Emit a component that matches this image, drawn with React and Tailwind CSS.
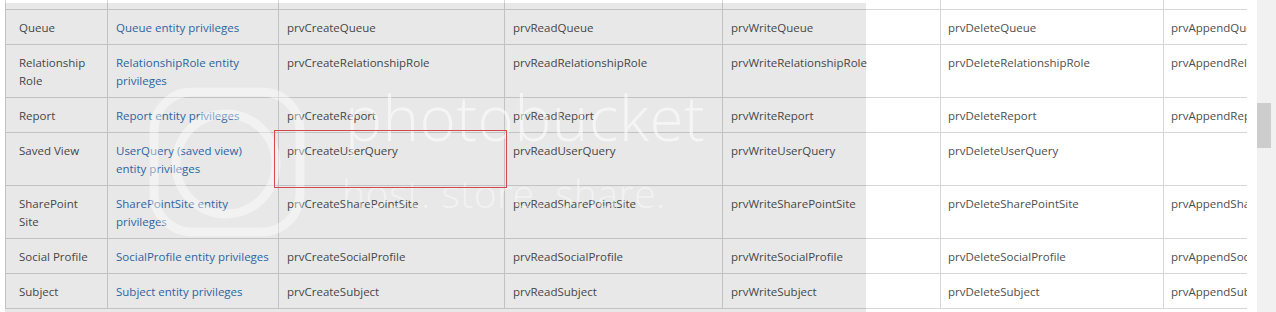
const cols = [
  { w: "w-[102px]", pad: "pl-[13px] pr-1" },
  { w: "w-[171px]", pad: "px-2" },
  { w: "w-[226px]", pad: "px-2" },
  { w: "w-[218px]", pad: "px-2" },
  { w: "w-[218px]", pad: "px-2" },
  { w: "w-[223px]", pad: "pl-[7px] pr-2" },
  { w: "w-[220px]", pad: "pl-[7px] pr-2" },
];

const rows = [
  [["Queue"], ["Queue entity privileges"], "prvCreateQueue", "prvReadQueue", "prvWriteQueue", "prvDeleteQueue", "prvAppendQueue"],
  [["Relationship", "Role"], ["RelationshipRole entity", "privileges"], "prvCreateRelationshipRole", "prvReadRelationshipRole", "prvWriteRelationshipRole", "prvDeleteRelationshipRole", "prvAppendRelationshipRole"],
  [["Report"], ["Report entity privileges"], "prvCreateReport", "prvReadReport", "prvWriteReport", "prvDeleteReport", "prvAppendReport"],
  [["Saved View"], ["UserQuery (saved view)", "entity privileges"], "prvCreateUserQuery", "prvReadUserQuery", "prvWriteUserQuery", "prvDeleteUserQuery", ""],
  [["SharePoint", "Site"], ["SharePointSite entity", "privileges"], "prvCreateSharePointSite", "prvReadSharePointSite", "prvWriteSharePointSite", "prvDeleteSharePointSite", "prvAppendSharePointSite"],
  [["Social Profile"], ["SocialProfile entity privileges"], "prvCreateSocialProfile", "prvReadSocialProfile", "prvWriteSocialProfile", "prvDeleteSocialProfile", "prvAppendSocialProfile"],
  [["Subject"], ["Subject entity privileges"], "prvCreateSubject", "prvReadSubject", "prvWriteSubject", "prvDeleteSubject", "prvAppendSubject"],
];

const Lines = ({ lines }) =>
  lines.map((l, i) => (
    <span key={i} className="block">
      {l}
    </span>
  ));

const Row = ({ row }) => (
  <div className="flex border-b border-[#d6d6d6]">
    {row.map((cell, i) => (
      <div
        key={i}
        className={`${cols[i].w} ${cols[i].pad} shrink-0 overflow-hidden border-r border-[#d6d6d6] pt-[9px] pb-[7px] whitespace-nowrap ${
          i === 1 ? "text-[#326fb3]" : "text-[#4e4e4e]"
        }`}
      >
        {Array.isArray(cell) ? <Lines lines={cell} /> : cell}
      </div>
    ))}
  </div>
);

const Watermark = () => (
  <div className="pointer-events-none absolute inset-0">
    <svg className="absolute left-[148px] top-[82px]" width="160" height="160" viewBox="0 0 160 160" fill="none">
      <rect x="6" y="10" width="146" height="140" rx="38" stroke="white" strokeOpacity="0.42" strokeWidth="9" />
      <circle cx="78" cy="82" r="50" stroke="white" strokeOpacity="0.42" strokeWidth="9" />
    </svg>
    <div className="absolute left-[345px] top-[86px] text-[62px] font-light leading-[62px] tracking-[0.5px] text-white/55">
      photobucket
    </div>
    <div className="absolute left-[342px] top-[173px] text-[39px] font-light leading-[39px] tracking-[0.5px] text-white/45">
      host. store. share.
    </div>
  </div>
);

export default function App() {
  return (
    <div className="relative flex h-[312px] w-[1276px] overflow-hidden bg-white font-['Open_Sans',sans-serif] text-[11.5px] leading-[18px]">
      <div className="w-[1247px] shrink-0 overflow-hidden pl-[5px]">
        <div className="border-l border-[#d6d6d6]">
          <div className="flex h-[10px] border-b border-[#d6d6d6]">
            {cols.map((c, i) => (
              <div key={i} className={`${c.w} shrink-0 border-r border-[#d6d6d6]`} />
            ))}
          </div>
          {rows.map((r, i) => (
            <Row key={i} row={r} />
          ))}
        </div>
      </div>
      <div className="ml-[10px] flex w-[19px] shrink-0 flex-col bg-[#f1f1f1] pt-[103px]">
        <div className="h-[45px] w-[14px] bg-[#cdcdcd]" />
      </div>

      <div className="pointer-events-none absolute left-[5px] top-[3px] h-[309px] w-[861px] bg-black/[0.09]" />
      <Watermark />
      <div className="pointer-events-none absolute left-[274px] top-[130px] h-[58px] w-[233px] border-[1.5px] border-[#d4494b]" />
    </div>
  );
}
